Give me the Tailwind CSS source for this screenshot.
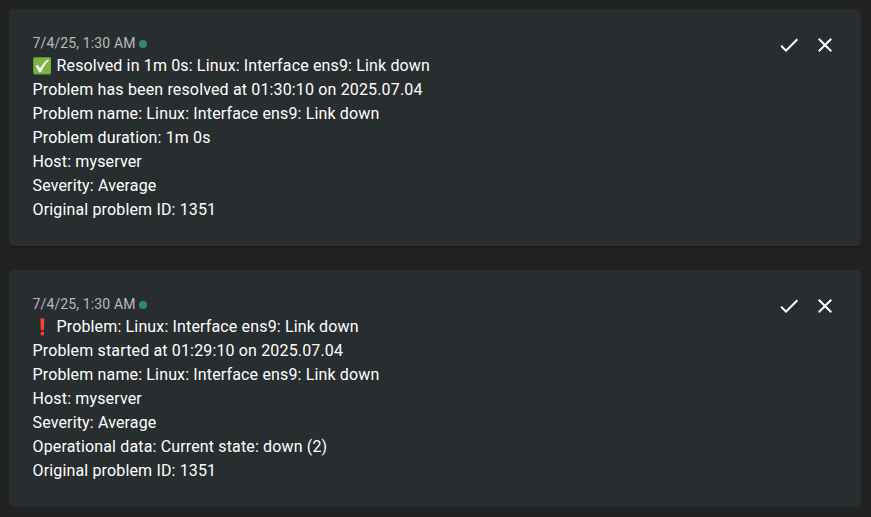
<!DOCTYPE html>
<html lang="en"><head><meta charset="utf-8"><title>Notifications</title>
<script src="https://cdn.jsdelivr.net/npm/@tailwindcss/browser@4"></script></head>
<body class="overflow-hidden bg-[#222222] font-[Roboto,sans-serif] text-white">
<main class="flex flex-col gap-6 pt-[9px] pr-[10px] pl-[9px]">
<article class="flex h-[237px] justify-between rounded bg-[#282d2f] pt-6 pr-6 pl-[23.5px] shadow-[0_2px_1px_-1px_rgba(0,0,0,.2),0_1px_1px_rgba(0,0,0,.14),0_1px_3px_rgba(0,0,0,.12)]">
<div class="text-base leading-6 tracking-[0.15px]">
<div class="flex h-[21px] items-start text-sm leading-[21px] tracking-[0.13px] text-[#b8babb]"><span>7/4/25, 1:30 AM</span><svg class="mt-[7px] ml-[3.3px] h-2 w-2" viewBox="0 0 8 8"><circle cx="4" cy="4" r="4" fill="#338574"/></svg></div>
<p class="flex items-center"><svg class="mb-px mr-[5.5px] ml-[0.5px] h-[18px] w-[18px]" viewBox="0 0 18 18"><rect x=".5" y=".5" width="17.5" height="17" rx="1" fill="#689f38"/><rect x=".5" y=".5" width="17" height="16" rx="1" fill="#7cb342"/><path d="M2.5 9 4.7 7.8 7 11.2Q10.2 5.5 14.8 2.4L16 3.2Q11 7.8 8.1 15.3L6 15.3Q4.6 11.5 2.5 9Z" fill="#fff"/></svg>Resolved in 1m 0s: Linux: Interface ens9: Link down</p>
<p>Problem has been resolved at 01:30:10 on 2025.07.04</p>
<p>Problem name: Linux: Interface ens9: Link down</p>
<p>Problem duration: 1m 0s</p>
<p>Host: myserver</p>
<p>Severity: Average</p>
<p>Original problem ID: 1351</p>
</div>
<div class="flex gap-3">
<svg class="h-6 w-6" viewBox="0 0 24 24" fill="currentColor"><path d="M9 16.17 4.83 12l-1.42 1.41L9 19 21 7l-1.41-1.41z"/></svg>
<svg class="h-6 w-6" viewBox="0 0 24 24" fill="currentColor"><path d="M19 6.41 17.59 5 12 10.59 6.41 5 5 6.41 10.59 12 5 17.59 6.41 19 12 13.41 17.59 19 19 17.59 13.41 12z"/></svg>
</div>
</article>
<article class="flex h-[237px] justify-between rounded bg-[#282d2f] pt-6 pr-6 pl-[23.5px] shadow-[0_2px_1px_-1px_rgba(0,0,0,.2),0_1px_1px_rgba(0,0,0,.14),0_1px_3px_rgba(0,0,0,.12)]">
<div class="text-base leading-6 tracking-[0.15px]">
<div class="flex h-[21px] items-start text-sm leading-[21px] tracking-[0.13px] text-[#b8babb]"><span>7/4/25, 1:30 AM</span><svg class="mt-[7px] ml-[3.3px] h-2 w-2" viewBox="0 0 8 8"><circle cx="4" cy="4" r="4" fill="#338574"/></svg></div>
<p class="flex items-center"><svg class="mb-px mr-[5.5px] ml-[0.5px] h-[18px] w-[18px]" viewBox="0 0 18 18" fill="#f44336"><path d="M7.4 .5h4l-.4 11.7H7.8z"/><path d="M7.8 14h3.2v3.3H7.8z"/></svg>Problem: Linux: Interface ens9: Link down</p>
<p>Problem started at 01:29:10 on 2025.07.04</p>
<p>Problem name: Linux: Interface ens9: Link down</p>
<p>Host: myserver</p>
<p>Severity: Average</p>
<p>Operational data: Current state: down (2)</p>
<p>Original problem ID: 1351</p>
</div>
<div class="flex gap-3">
<svg class="h-6 w-6" viewBox="0 0 24 24" fill="currentColor"><path d="M9 16.17 4.83 12l-1.42 1.41L9 19 21 7l-1.41-1.41z"/></svg>
<svg class="h-6 w-6" viewBox="0 0 24 24" fill="currentColor"><path d="M19 6.41 17.59 5 12 10.59 6.41 5 5 6.41 10.59 12 5 17.59 6.41 19 12 13.41 17.59 19 19 17.59 13.41 12z"/></svg>
</div>
</article>
</main></body></html>
